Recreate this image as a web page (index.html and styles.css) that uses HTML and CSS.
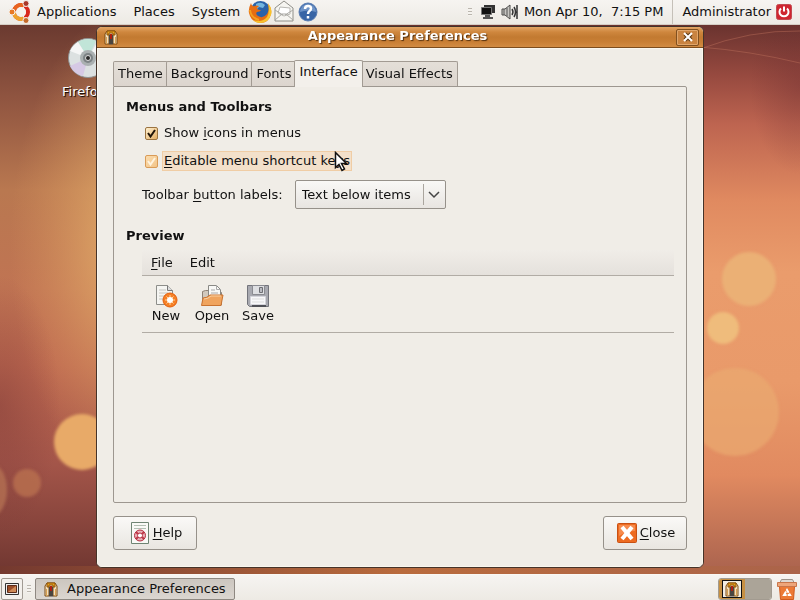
FILE: index.html
```html
<!DOCTYPE html>
<html lang="en">

<head>
	<meta charset="UTF-8" />
	<meta name="viewport" content="width=device-width, initial-scale=1.0" />
	<title>Appearance Preferences</title>
	<link rel="stylesheet" href="styles.css">
</head>

<body>
	<!-- shared icon -->
	<svg class="defs" width="0" height="0" aria-hidden="true">
		<symbol id="theme-icon" viewBox="0 0 16 16">
			<path d="M2 15V5L4 2h8l2 3v10h-4V6H6v9z" fill="#f3e0bd" stroke="#7d4a10" />
			<path d="M4 6V2h8v4h-2V4H6v2z" fill="#e8a21c" stroke="#8c5208" />
			<path d="M6 6h4v9.500H6z" fill="#4a4540" />
			<path d="M7 5h2v5H7z" fill="#b01f10" />
			<path d="M3 8h1v7H3zM12 8h1v7h-1z" fill="#d7a052" />
		</symbol>
	</svg>

	<header class="panel top-panel">
		<nav class="menus">
			<svg class="logo" viewBox="0 0 24 24">
				<circle cx="13" cy="12" r="7" fill="none" stroke="#d9281c" stroke-width="4" />
				<path d="M6 12a7 7 0 0 1 10.500-6" fill="none" stroke="#e8641f" stroke-width="4" />
				<path d="M6 12a7 7 0 0 0 10.500 6" fill="none" stroke="#eda32d" stroke-width="4" />
				<path d="M13 12H4M13 12l5-9M13 12l5 9" stroke="#f5f2ec" stroke-width="1" />
				<circle cx="13" cy="12" r="5" fill="#f5f2ec" />
				<circle cx="4" cy="12" r="3" fill="#e87a25" stroke="#f5f2ec" />
				<circle cx="18" cy="3.500" r="3" fill="#a8382a" stroke="#f5f2ec" />
				<circle cx="18" cy="20.500" r="3" fill="#c46a2b" stroke="#f5f2ec" />
			</svg>
			<a href="#">Applications</a>
			<a href="#">Places</a>
			<a href="#">System</a>
		</nav>
		<div class="launchers">
			<svg width="24" height="24" viewBox="0 0 24 24">
				<circle cx="12.500" cy="11" r="10" fill="#2a62a8" />
				<path d="M8 4q5-3 9 1l-2 3-4-1-3 3z" fill="#72b5df" />
				<path d="M3 3Q0 9 1 13q2 9 11 10 9 0 11-9 1-6-3-10 2 6-1 10-4 5-9 2-3-2-1-4 3 0 4-2-4 0-4-2l2-2q-3-1-4 0Q4 7 3 3z" fill="#e66d13" />
				<path d="M20 3q5 6 3 12-3 8-11 8-4 0-7-3 9 3 14-3 3-5 1-14z" fill="#f8c22c" />
				<path d="M2 10q1 8 9 10" fill="none" stroke="#f4a01e" stroke-width="2" />
			</svg>
			<svg width="24" height="24" viewBox="0 0 24 24">
				<path d="M3 8l9-7 9 7v13H3z" fill="#f6f5f1" stroke="#8f8e88" />
				<path d="M6 13l2-6 10 1v6l-6 2z" fill="#fff" stroke="#b8b7b2" />
				<path d="M3 20l7-6h4l7 6M3 10l8 5M21 10l-8 5" fill="none" stroke="#aaa9a4" />
			</svg>
			<svg width="24" height="24" viewBox="0 0 24 24">
				<circle cx="12" cy="12" r="9" fill="#3965a5" stroke="#5c7fb4" />
				<path d="M4 12a8 8 0 0 1 16 0q-8-3-16 0z" fill="#6f94c7" />
				<path d="M9 9q0-3 3-3t3 2.500q0 1.500-1.500 2.500T12 14M12 16v2.500" fill="none" stroke="#fff" stroke-width="2.500" />
			</svg>
		</div>
		<div class="tray">
			<span class="grip"></span>
			<svg width="16" height="16" viewBox="0 0 16 16">
				<path d="M4 1h11v8H4z" fill="#333" />
				<path d="M1.500 3.500h10v7h-10z" fill="#111" stroke="#777" />
				<path d="M5 11h5v2h3v2H3v-2h2z" fill="#555" />
			</svg>
			<svg width="18" height="16" viewBox="0 0 18 16">
				<path d="M1 5h3l5-4v14l-5-4H1z" fill="#c7c6c2" stroke="#4b4b49" />
				<path d="M3 5v6M6 4v8" stroke="#555" />
				<path d="M11 5q2 3 0 6M13 3q3 5 0 10M16 1v14" fill="none" stroke="#333" stroke-width="1.500" />
			</svg>
			<time class="clock">Mon Apr 10,&nbsp; 7:15 PM</time>
			<span class="divider"></span>
			<span class="user">Administrator</span>
			<svg width="16" height="16" viewBox="0 0 16 16">
				<rect x="0.500" y="0.500" width="15" height="15" rx="2" fill="#cf2630" stroke="#c24a50" />
				<path d="M5 4.500a4.500 4.500 0 1 0 6 0" fill="none" stroke="#fff" stroke-width="2" />
				<path d="M8 2.500v5" stroke="#fff" stroke-width="2" />
			</svg>
		</div>
	</header>

	<main class="desktop">
		<!-- wallpaper -->
		<svg class="wallpaper" viewBox="0 0 800 549" preserveAspectRatio="none" aria-hidden="true">
			<defs>
				<linearGradient id="left" x1="0" y1="0" x2="0" y2="1">
					<stop offset="0" stop-color="#6b3a30" />
					<stop offset="0.130" stop-color="#8f5440" />
					<stop offset="0.300" stop-color="#b97850" />
					<stop offset="0.480" stop-color="#c07453" />
					<stop offset="0.620" stop-color="#bd6850" />
					<stop offset="0.800" stop-color="#a35549" />
					<stop offset="0.920" stop-color="#85433b" />
					<stop offset="1" stop-color="#6f3630" />
				</linearGradient>
				<linearGradient id="right" x1="0" y1="0" x2="0" y2="1">
					<stop offset="0" stop-color="#6a332f" />
					<stop offset="0.090" stop-color="#96493f" />
					<stop offset="0.180" stop-color="#bd6450" />
					<stop offset="0.320" stop-color="#e08a60" />
					<stop offset="0.450" stop-color="#ea9c6c" />
					<stop offset="0.650" stop-color="#e99a6a" />
					<stop offset="0.820" stop-color="#e18a60" />
					<stop offset="1" stop-color="#a9624e" />
				</linearGradient>
				<radialGradient id="glow">
					<stop offset="0" stop-color="#eabb70" stop-opacity="0.900" />
					<stop offset="1" stop-color="#e09c60" stop-opacity="0" />
				</radialGradient>
				<radialGradient id="shade">
					<stop offset="0" stop-color="#6c2d30" stop-opacity="0.350" />
					<stop offset="1" stop-color="#6c2d30" stop-opacity="0" />
				</radialGradient>
				<linearGradient id="bottom">
					<stop offset="0" stop-color="#74392f" />
					<stop offset="0.500" stop-color="#b96b3d" />
					<stop offset="1" stop-color="#ab644a" />
				</linearGradient>
				<filter id="soft"><feGaussianBlur stdDeviation="1.500" /></filter>
			</defs>
			<rect width="400" height="549" fill="url(#left)" />
			<rect x="400" width="400" height="549" fill="url(#right)" />
			<rect y="541" width="800" height="8" fill="url(#bottom)" />
			<ellipse cx="135" cy="220" rx="125" ry="240" fill="url(#glow)" />
			<ellipse cx="0" cy="380" rx="60" ry="130" fill="url(#shade)" />
			<ellipse cx="800" cy="60" rx="50" ry="90" fill="url(#shade)" />
			<path d="M700 24Q750 5 800 6M700 22Q750 26 800 38" fill="none" stroke="#b86b58" opacity="0.500" />
			<g filter="url(#soft)">
				<circle cx="82" cy="417" r="28" fill="#e8aa68" />
				<circle cx="27" cy="458" r="14" fill="#b96f50" opacity="0.800" />
				<ellipse cx="-8" cy="465" rx="15" ry="26" fill="#b87556" opacity="0.700" />
				<circle cx="749" cy="254" r="27" fill="#ebb377" opacity="0.900" />
				<circle cx="723" cy="303" r="16" fill="#efbc7c" />
				<circle cx="735" cy="387" r="44" fill="#e9aa70" opacity="0.700" />
			</g>
		</svg>

		<a class="launcher" href="#">
			<svg width="40" height="40" viewBox="0 0 40 40">
				<circle cx="20" cy="20" r="19.500" fill="#dce1e1" stroke="#8f9292" />
				<path d="M20 20L10 4a19 19 0 0 1 18-1z" fill="#c1e5d8" />
				<path d="M20 20L2 28a19 19 0 0 0 13 10z" fill="#d6c9e4" />
				<path d="M20 20L30 3a19 19 0 0 1 8 11zM20 20L2 13a19 19 0 0 1 8-9z" fill="#f5f6f6" />
				<circle cx="20" cy="20" r="8" fill="#aab0b1" />
				<circle cx="20" cy="20" r="5" fill="#7d8385" />
				<circle cx="20" cy="20" r="2.500" fill="#292929" stroke="#dcdcdc" />
			</svg>
			<span>Firefox</span>
		</a>

		<section class="window">
			<header class="titlebar">
				<svg width="16" height="16"><use href="#theme-icon" /></svg>
				<h1>Appearance Preferences</h1>
				<button class="close-x" type="button" aria-label="Close window">
					<svg width="10" height="10" viewBox="0 0 10 10">
						<path d="M2 2l6 6M8 2l-6 6" stroke="#5d3812" stroke-width="4" />
						<path d="M1 1l8 8M9 1l-8 8" stroke="#fff" stroke-width="2" />
					</svg>
				</button>
			</header>

			<div class="window-body">
				<div class="tabs" role="tablist">
					<button type="button" role="tab">Theme</button>
					<button type="button" role="tab">Background</button>
					<button type="button" role="tab">Fonts</button>
					<button type="button" role="tab" class="active" aria-selected="true">Interface</button>
					<button type="button" role="tab">Visual Effects</button>
				</div>

				<div class="page" role="tabpanel">
					<h2>Menus and Toolbars</h2>
					<div class="option">
						<input type="checkbox" id="icons" checked>
						<label for="icons">Show <u>i</u>cons in menus</label>
					</div>
					<div class="option hover">
						<input type="checkbox" id="keys">
						<label for="keys"><u>E</u>ditable menu shortcut keys</label>
						<svg class="pointer" width="14" height="22" viewBox="0 0 14 22" aria-hidden="true">
							<path d="M1.500 1.500v15l3.500-3 3 6 2.500-1.500-3-5.500h5z" fill="#fff" stroke="#111" stroke-width="1.500" />
						</svg>
					</div>
					<div class="field">
						<label for="labels">Toolbar <u>b</u>utton labels:</label>
						<div class="combo">
							<select id="labels">
								<option>Text below items</option>
								<option>Text beside items</option>
								<option>Icons only</option>
								<option>Text only</option>
							</select>
							<svg width="12" height="8" viewBox="0 0 12 8"><path d="M1 1l5 5 5-5" fill="none" stroke="#444" stroke-width="1.500" /></svg>
						</div>
					</div>

					<h2>Preview</h2>
					<div class="preview">
						<div class="menubar">
							<span><u>F</u>ile</span>
							<span>Edit</span>
						</div>
						<div class="toolbar">
							<button type="button">
								<svg width="24" height="24" viewBox="0 0 24 24">
									<path d="M2.500 1.500h11l5 5v14h-16z" fill="#f5f5f2" stroke="#8d8e8a" />
									<path d="M13.500 1.500v5h5" fill="#ddd" stroke="#777" />
									<path d="M5 6h7M5 9h9M5 12h7M5 15h6" stroke="#c5c5c0" />
									<circle cx="16" cy="16" r="7" fill="#f58026" stroke="#e45f0c" />
									<path d="M16 11v10M11 16h10M12.500 12.500l7 7M19.500 12.500l-7 7" stroke="#ffd3a0" stroke-width="1" />
									<circle cx="16" cy="16" r="3" fill="#fff" />
								</svg>
								New
							</button>
							<button type="button">
								<svg width="24" height="24" viewBox="0 0 24 24">
									<path d="M2.500 21V7.500l3-1h4l2 2h10V21z" fill="#d2c9bd" stroke="#8f8174" />
									<path d="M8.500 14V1.500h8l4 4V14z" fill="#f8f8f6" stroke="#898985" />
									<path d="M16.500 1.500v4h4M11 6h4M11 9h7" fill="none" stroke="#aaa" />
									<path d="M3 14q4 0 7-3h13l-2 10.500H1.500z" fill="#f0a45e" stroke="#c97331" />
									<path d="M4 15q4 0 7-3h10" fill="none" stroke="#fbd0a0" />
								</svg>
								Open
							</button>
							<button type="button">
								<svg width="24" height="24" viewBox="0 0 24 24">
									<path d="M1.500 1.500h21v21h-19l-2-2z" fill="#a8a9b0" stroke="#73747b" />
									<path d="M6.500 1.500h12v9h-12z" fill="#dedfe2" stroke="#8a8b91" />
									<path d="M13.500 3.500h3v5h-3z" fill="#b9bac0" stroke="#6d6e73" />
									<path d="M4.500 12.500h15v8h-15z" fill="#f8f8fa" stroke="#d5d5db" />
									<path d="M6 15h12M6 18h12" stroke="#ddd" />
									<path d="M6 22h14" stroke="#505158" stroke-width="2" />
								</svg>
								Save
							</button>
						</div>
					</div>
				</div>

				<footer class="actions">
					<button type="button">
						<svg width="24" height="24" viewBox="0 0 24 24">
							<path d="M3.500 1.500h17v21h-17z" fill="#f9f9f6" stroke="#6f8473" />
							<path d="M6 4.500h12M6 7.500h12" stroke="#b3bfb3" />
							<circle cx="12" cy="14.500" r="4" fill="none" stroke="#e9b3b8" stroke-width="3" />
							<path d="M8 11l2 2M16 11l-2 2M8 18l2-2M16 18l-2-2" stroke="#c23a4a" stroke-width="2" />
							<circle cx="12" cy="14.500" r="5.500" fill="none" stroke="#b52e40" />
							<circle cx="12" cy="14.500" r="2.500" fill="#fff" stroke="#b52e40" />
						</svg>
						<span><u>H</u>elp</span>
					</button>
					<button type="button">
						<svg width="24" height="24" viewBox="0 0 24 24">
							<rect x="2.500" y="2.500" width="19" height="19" rx="1" fill="#ed6b21" stroke="#c95012" />
							<path d="M4 4h16v6q-8 0-16 5z" fill="#f68b4d" />
							<path d="M7 6l10 12M17 6L7 18" stroke="#fff" stroke-width="4" />
						</svg>
						<span><u>C</u>lose</span>
					</button>
				</footer>
			</div>
		</section>
	</main>

	<footer class="panel bottom-panel">
		<button class="show-desktop" type="button" aria-label="Show desktop">
			<svg width="16" height="16" viewBox="0 0 16 16">
				<path d="M1.500 2.500h13v11h-13z" fill="#eee" stroke="#333" />
				<path d="M3.500 4.500h9v7h-9z" fill="#9b4c27" stroke="#5d2c18" />
				<path d="M4 11l8-6v6z" fill="#d08b58" />
			</svg>
		</button>
		<span class="grip"></span>
		<button class="task" type="button">
			<svg width="16" height="16"><use href="#theme-icon" /></svg>
			Appearance Preferences
		</button>
		<div class="workspaces">
			<span class="current"><svg width="16" height="16"><use href="#theme-icon" /></svg></span>
			<span></span>
		</div>
		<svg class="trash" width="20" height="22" viewBox="0 0 20 22">
			<path d="M2.500 5.500l2-4h11l2 4z" fill="#ddd9d3" stroke="#9b948b" />
			<path d="M2.500 8.500h15l-1 13h-13z" fill="#ec7a35" stroke="#d05a1c" />
			<path d="M0.500 4.500h19v4h-19z" fill="#eda67a" stroke="#c9764a" />
			<path d="M7 17l3-5 3 5z" fill="none" stroke="#fff" stroke-width="2" stroke-dasharray="4 1" />
		</svg>
	</footer>
</body>

</html>
```
FILE: styles.css
```css
* {
	box-sizing: border-box;
	margin: 0;
	padding: 0;
}

body {
	display: flex;
	flex-direction: column;
	min-height: 100vh;
	font: 13px/16px "DejaVu Sans", sans-serif;
	color: #111;
	background: #efebe5;
}

button,
select {
	font: inherit;
	color: inherit;
}

a {
	color: inherit;
	text-decoration: none;
}

u {
	text-underline-offset: 2px;
}

svg {
	display: block;
	flex: none;
}

.defs {
	position: absolute;
}

/* panels */
.panel {
	display: flex;
	align-items: center;
	background: linear-gradient(#f6f4f1, #edeae4);
}

.top-panel {
	height: 25px;
	padding: 0 8px;
	border-bottom: 1px solid #d5cec5;
}

.menus {
	display: flex;
	align-items: center;
	gap: 17px;
}

.menus .logo {
	width: 24px;
	height: 24px;
	margin-right: -12px;
}

.launchers {
	display: flex;
	margin-left: 8px;
}

.tray {
	display: flex;
	align-items: center;
	gap: 5px;
	margin-left: auto;
}

.grip {
	width: 4px;
	height: 8px;
	background: repeating-linear-gradient(#bbb6ae 0 1px, #f5f3ef 1px 3px);
}

.tray .grip {
	margin-right: 3px;
}

.divider {
	width: 1px;
	height: 24px;
	margin: 0 4px;
	background: #c5c0b8;
}

/* desktop */
.desktop {
	position: relative;
	display: flex;
	flex: 1;
	padding: 1px 96px 6px;
}

.wallpaper {
	position: absolute;
	width: 100%;
	height: 100%;
	inset: 0;
}

.launcher {
	position: absolute;
	left: 62px;
	top: 13px;
	color: #fff;
	text-shadow: 1px 1px 1px #000;
}

.launcher svg {
	margin: 0 6px 6px;
}

/* window */
.window {
	position: relative;
	display: flex;
	flex: 1;
	flex-direction: column;
	border: 1px solid #453329;
	border-radius: 6px;
	background: #f0ede7;
	overflow: hidden;
}

.titlebar {
	display: flex;
	align-items: center;
	height: 21px;
	padding: 0 4px 0 6px;
	background: linear-gradient(#e2a565, #cf873e 25%, #c27a31 50%, #c97f35 75%, #d28c43);
	border-bottom: 1px solid #7d4d1d;
}

.titlebar h1 {
	flex: 1;
	font-size: 13px;
	line-height: 16px;
	padding-bottom: 2px;
	color: #fff;
	text-align: center;
	text-shadow: 1px 1px 1px #54300d;
}

.close-x {
	display: flex;
	align-items: center;
	justify-content: center;
	width: 23px;
	height: 17px;
	border: 1px solid #81501f;
	border-radius: 2px;
	background: #c98340;
	box-shadow: inset 0 0 0 1px #e0a66b;
}

.window-body {
	display: flex;
	flex: 1;
	flex-direction: column;
	padding: 12px 16px 17px;
	box-shadow: inset 0 0 0 1px #faf6ed;
}

.tabs {
	display: flex;
	align-items: flex-end;
}

.tabs button {
	height: 25px;
	padding: 0 4px;
	margin-right: -2px;
	border: 1px solid #a29b93;
	border-bottom: 0;
	border-radius: 2px 2px 0 0;
	background: linear-gradient(#e4dfd8, #dcd5ce);
}

.tabs .active {
	position: relative;
	height: 27px;
	padding-bottom: 4px;
	margin-bottom: -1px;
	background: #f3f0eb;
}

.page {
	flex: 1;
	padding: 12px;
	border: 1px solid #9d9790;
	border-radius: 0 2px 2px 2px;
}

.page h2 {
	font-size: 13px;
	line-height: 16px;
}

.option {
	display: flex;
	align-items: center;
	height: 20px;
	margin: 8px 0 0 19px;
}

.option input {
	appearance: none;
	width: 13px;
	height: 13px;
	margin-right: 5px;
	border: 1px solid #9b7441;
	border-radius: 2px;
	background: linear-gradient(135deg, #fff0d0, #edbd79);
}

.option input:checked {
	background: url("data:image/svg+xml,%3Csvg xmlns='http://www.w3.org/2000/svg' viewBox='0 0 11 11'%3E%3Cpath d='M2 5l2.500 3.500L9 2' fill='none' stroke='%23201408' stroke-width='2'/%3E%3C/svg%3E"), linear-gradient(135deg, #fff0d0, #e4ae63);
}

.option label {
	padding: 1px;
	border: 1px solid transparent;
	margin-left: -1px;
}

.hover {
	position: relative;
}

.option.hover input {
	border-color: #d99b57;
	background: url("data:image/svg+xml,%3Csvg xmlns='http://www.w3.org/2000/svg' viewBox='0 0 11 11'%3E%3Cpath d='M2 5l2.500 3.500L9 2' fill='none' stroke='%23fff3df' stroke-width='2'/%3E%3C/svg%3E"), linear-gradient(135deg, #fbdcae, #f2c488);
}

.hover label {
	background: #f3e0ca;
	border-color: #f0cda5;
}

.pointer {
	position: absolute;
	left: 189px;
	top: 0;
}

.field {
	display: flex;
	align-items: center;
	gap: 12px;
	margin: 9px 0 19px 16px;
}

.combo {
	position: relative;
}

.combo select {
	appearance: none;
	width: 151px;
	height: 29px;
	padding: 0 32px 0 6px;
	border: 1px solid #96918a;
	border-radius: 2px;
	background: linear-gradient(#f9f8f6, #e8e5e1);
}

.combo svg {
	position: absolute;
	right: 6px;
	top: 11px;
	pointer-events: none;
}

.combo::after {
	content: "";
	position: absolute;
	right: 22px;
	top: 4px;
	bottom: 4px;
	border-left: 1px solid #aaa59e;
}

/* preview */
.preview {
	margin-left: 16px;
}

.menubar {
	display: flex;
	gap: 17px;
	margin-top: 6px;
	padding: 5px 9px 4px;
	border-bottom: 1px solid #b1aca5;
	background: linear-gradient(#f0ede8, #e5e1dc);
}

.toolbar {
	display: flex;
	height: 57px;
	padding: 8px 1px 0;
	border-bottom: 1px solid #b1aca5;
}

.toolbar button {
	display: flex;
	flex-direction: column;
	align-items: center;
	width: 46px;
	border: 0;
	background: none;
}

.actions {
	display: flex;
	justify-content: space-between;
	margin-top: 13px;
}

.actions button {
	display: flex;
	align-items: center;
	justify-content: center;
	gap: 1px;
	width: 84px;
	height: 34px;
	border: 1px solid #96918a;
	border-radius: 3px;
	background: linear-gradient(#faf9f7, #e9e6e1);
}

/* taskbar */
.bottom-panel {
	height: 26px;
	padding: 2px 3px 0 1px;
	border-top: 1px solid #faf8f4;
}

.show-desktop {
	display: flex;
	align-items: center;
	justify-content: center;
	width: 22px;
	height: 22px;
	margin-right: 4px;
	border: 1px solid #a19b93;
	border-radius: 2px;
	background: #f3f0ec;
}

.task {
	display: flex;
	align-items: center;
	gap: 8px;
	width: 200px;
	height: 22px;
	margin-left: 4px;
	padding: 0 7px;
	border: 1px solid #8e8881;
	border-radius: 2px;
	background: linear-gradient(#ccc6bf, #dbd6d0);
}

.workspaces {
	display: flex;
	height: 22px;
	margin-left: auto;
	border: 1px solid #a29b90;
	border-radius: 3px;
	overflow: hidden;
}

.workspaces span {
	width: 26px;
	background: #aba498;
}

.workspaces .current {
	display: flex;
	align-items: center;
	justify-content: center;
	background: #c69043;
}

.workspaces .current svg {
	width: 20px;
	height: 18px;
	border: 1px solid #111;
	background: #f3eee3;
}

.trash {
	margin-left: 5px;
}
```
